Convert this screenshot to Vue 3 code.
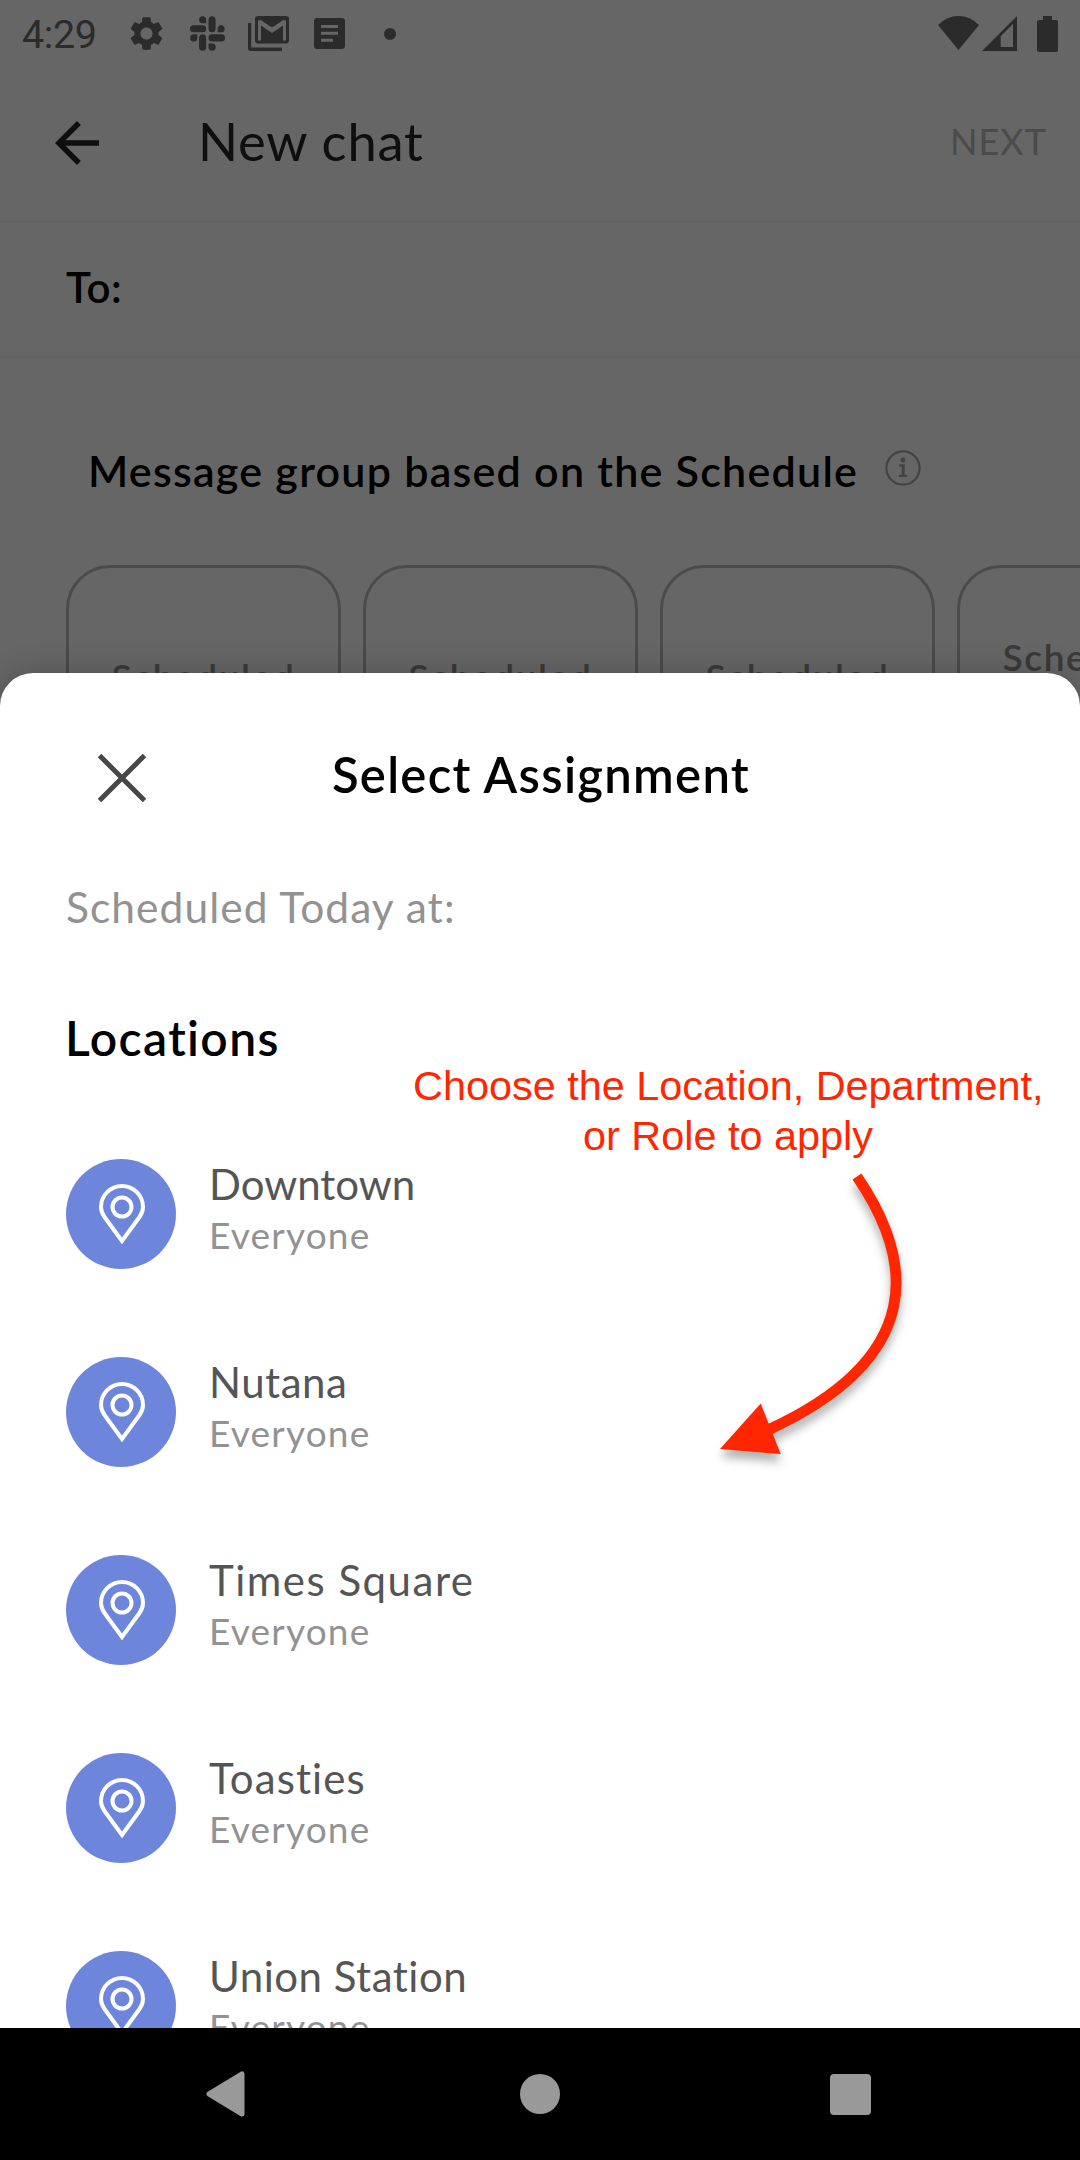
<template>
  <div class="screen">
    <header class="status-bar">
      <span class="clock">4:29</span>
      <svg class="status-gear" viewBox="2.2 2 19.6 20">
        <path d="M19.14 12.94c.04-.3.06-.61.06-.94 0-.32-.02-.64-.07-.94l2.03-1.58a.49.49 0 0 0 .12-.61l-1.92-3.32a.488.488 0 0 0-.59-.22l-2.39.96c-.5-.38-1.03-.7-1.62-.94l-.36-2.54a.484.484 0 0 0-.48-.41h-3.84c-.24 0-.43.17-.47.41l-.36 2.54c-.59.24-1.13.57-1.62.94l-2.39-.96c-.22-.08-.47 0-.59.22L2.74 8.87c-.12.21-.08.47.12.61l2.03 1.58c-.05.3-.09.63-.09.94s.02.64.07.94l-2.03 1.58a.49.49 0 0 0-.12.61l1.92 3.32c.12.22.37.29.59.22l2.39-.96c.5.38 1.03.7 1.62.94l.36 2.54c.05.24.24.41.48.41h3.84c.24 0 .44-.17.47-.41l.36-2.54c.59-.24 1.13-.56 1.62-.94l2.39.96c.22.08.47 0 .59-.22l1.92-3.32c.12-.22.07-.47-.12-.61l-2.01-1.58zM12 15.6c-1.98 0-3.6-1.62-3.6-3.6s1.62-3.6 3.6-3.6 3.6 1.62 3.6 3.6-1.62 3.6-3.6 3.6z" />
      </svg>
      <svg class="status-slack" viewBox="0 0 104 103">
        <path d="M48 21H37.500A10.500 10.500 0 1 1 48 10.500z" />
        <rect x="55" y="0" width="21" height="48" rx="10.500" />
        <path d="M82 48V37.500A10.500 10.500 0 1 1 92.500 48z" />
        <rect x="0" y="27" width="48" height="21" rx="10.500" />
        <path d="M22 54V65A10.800 10.800 0 1 1 11 54z" />
        <rect x="27" y="54" width="21" height="49" rx="10.500" />
        <rect x="55" y="54" width="49" height="21" rx="10.500" />
        <path d="M55 81H65.500A10.800 10.800 0 1 1 55 92z" />
      </svg>
      <svg class="status-mail" viewBox="0 0 41 35">
        <path d="M0 7h3.200v24.600H34V35H3q-3 0-3-3z" />
        <path fill-rule="evenodd" d="M10 0h28q3 0 3 3v21.500q0 3-3 3H10q-3 0-3-3V3q0-3 3-3zM10 4.500V24.500H13V9.500L24 17L35 9.500V24.500H38V4.500L35.500 4L24 11.500L12.500 4z" />
      </svg>
      <svg class="status-note" viewBox="0 0 31 31">
        <path fill-rule="evenodd" d="M3 0h25q3 0 3 3v25q0 3-3 3H3q-3 0-3-3V3q0-3 3-3zM7 7v3h17V7zM7 13.800v3h17v-3zM7 20.800v3h12v-3z" />
      </svg>
      <i class="status-dot"></i>
      <svg class="status-wifi" viewBox="0 0 41 34">
        <path d="M20.500 34L0 9Q9 0 20.500 0T41 9z" />
      </svg>
      <svg class="status-signal" viewBox="0 0 35 35">
        <path fill-rule="evenodd" d="M0 35L35 0V35zM18.700 20.300V31H31V8z" />
      </svg>
      <svg class="status-battery" viewBox="0 0 21 36">
        <path d="M6 0h9v4h4q2 0 2 2v28q0 2-2 2H2q-2 0-2-2V6q0-2 2-2h4z" />
      </svg>
    </header>

    <nav class="app-bar">
      <svg class="back" viewBox="0 0 24 24">
        <path d="M20 11H7.830l5.590-5.590L12 4l-8 8 8 8 1.410-1.410L7.830 13H20v-2z" />
      </svg>
      <h1>New chat</h1>
      <span class="next">NEXT</span>
    </nav>

    <div class="recipients">To:</div>

    <section class="groups">
      <div class="groups-head">
        <h2>Message group based on the Schedule</h2>
        <svg class="info" viewBox="0 0 36 36">
          <circle cx="18" cy="18" r="16.600" fill="none" stroke="#a8a8a8" stroke-width="2.200" />
          <circle cx="18" cy="10" r="2.400" />
          <path d="M14.200 14.300h5.500v10.500h2.500v2.300h-8.200v-2.300h2.600v-8.200h-2.400z" />
        </svg>
      </div>
      <div class="cards">
        <div v-for="(card, i) in cards" :key="i" class="card" :class="{ tall: card.length > 2 }">
          <span v-for="line in card" :key="line">{{ line }}</span>
        </div>
      </div>
    </section>

    <div class="scrim"></div>

    <section class="sheet">
      <div class="sheet-head">
        <svg class="close" viewBox="0 0 48 48">
          <path d="M1.500 1.500L46.500 46.500M46.500 1.500L1.500 46.500" />
        </svg>
        <h2>Select Assignment</h2>
      </div>
      <p class="subtitle">Scheduled Today at:</p>
      <h3>Locations</h3>
      <ul class="locations">
        <li v-for="location in locations" :key="location.name">
          <span class="avatar">
            <svg viewBox="0 0 46 60">
              <path d="M23 57L5.500 33Q2 28 2 23A21 21 0 0 1 44 23Q44 28 40.500 33z" />
              <circle cx="23" cy="23" r="9.500" />
            </svg>
          </span>
          <span class="label">
            <span class="name" :style="{ letterSpacing: location.tracking + 'px' }">{{ location.name }}</span>
            <span class="who">Everyone</span>
          </span>
        </li>
      </ul>
    </section>

    <!-- callout drawn over the sheet -->
    <p class="callout">Choose the Location, Department,<br /><span>or Role to apply</span></p>
    <svg class="arrow" viewBox="700 1160 220 320">
      <path d="M857 1176.500C914 1260 927 1357 768 1430" fill="none" stroke="#ff2600" stroke-width="10.800" />
      <path d="M720 1449L760.700 1403.500L780.700 1454z" fill="#ff2600" />
    </svg>

    <footer class="nav-bar">
      <svg class="nav-back" viewBox="0 0 39 46">
        <path d="M3 23L36 3V43z" />
      </svg>
      <i class="nav-home"></i>
      <i class="nav-recent"></i>
    </footer>
  </div>
</template>

<script setup>
const locations = [
  { name: 'Downtown', tracking: 0 },
  { name: 'Nutana', tracking: 0.5 },
  { name: 'Times Square', tracking: 1.5 },
  { name: 'Toasties', tracking: 1.1 },
  { name: 'Union Station', tracking: 0.5 }
];

const cards = [
  ['Scheduled', 'Now'],
  ['Scheduled', 'Today'],
  ['Scheduled', 'Tomorrow'],
  ['Scheduled', 'on a', 'Date']
];
</script>

<style>
body {
  margin: 0;
}
</style>

<style scoped>
.screen {
  position: relative;
  width: 1080px;
  height: 2160px;
  overflow: hidden;
  background: #fff;
  font-family: Lato, "Open Sans", sans-serif;
  font-variant-ligatures: none;
}

h1,
h2,
h3,
p,
ul {
  margin: 0;
  padding: 0;
}

svg {
  display: block;
  flex: none;
}

.status-bar {
  display: flex;
  align-items: center;
  box-sizing: border-box;
  height: 67px;
  padding: 0 22px;
  fill: #6b6b6b;
  color: #6b6b6b;
}

.clock {
  width: 108px;
  padding-top: 1px;
  font-family: Roboto, sans-serif;
  font-size: 39.5px;
  letter-spacing: -0.4px;
  white-space: nowrap;
}

.status-gear {
  width: 33px;
  height: 35px;
}

.status-slack {
  width: 35px;
  height: 35px;
  margin-left: 27px;
}

.status-mail {
  width: 41px;
  height: 35px;
  margin-left: 23px;
}

.status-note {
  width: 31px;
  height: 31px;
  margin-left: 25px;
}

.status-dot {
  width: 12px;
  height: 12px;
  margin-left: 39px;
  border-radius: 50%;
  background: #6b6b6b;
}

.status-wifi {
  width: 41px;
  height: 34px;
  margin: 0 3px 2px auto;
}

.status-signal {
  width: 35px;
  height: 35px;
  margin: 0 20px 1px 0;
}

.status-battery {
  width: 21px;
  height: 36px;
}

.app-bar {
  display: flex;
  align-items: center;
  box-sizing: border-box;
  height: 156px;
  padding: 0 33px 4px 44px;
  border-bottom: 3px solid #f6f6f6;
}

.back {
  width: 66px;
  height: 66px;
  margin-top: 2px;
  fill: #262626;
}

h1 {
  flex: 1;
  margin: -2px 0 0 88px;
  color: #262626;
  font-size: 52.5px;
  font-weight: 400;
  letter-spacing: 0.8px;
}

.next {
  margin-top: -1px;
  color: #bbb;
  font-size: 36px;
  letter-spacing: 1px;
}

.recipients {
  height: 132px;
  padding-left: 66px;
  border-bottom: 3px solid #f7f7f7;
  color: #000;
  font-size: 42px;
  font-weight: 600;
  letter-spacing: 0.6px;
  line-height: 128px;
}

.groups-head {
  display: flex;
  align-items: center;
  height: 207px;
  padding: 0 0 0 88px;
}

.groups-head h2 {
  width: 797px;
  padding-top: 18px;
  font-size: 43px;
  font-weight: 600;
  letter-spacing: 1.25px;
  white-space: nowrap;
}

.info {
  width: 36px;
  height: 36px;
  margin-top: 13px;
  fill: #a8a8a8;
}

.cards {
  display: flex;
  gap: 22px;
  padding-left: 66px;
}

.card {
  display: flex;
  flex: none;
  flex-direction: column;
  align-items: center;
  justify-content: center;
  box-sizing: border-box;
  width: 275px;
  height: 275px;
  padding-bottom: 2px;
  border: 3px solid #bbb;
  border-radius: 44px;
  color: #919191;
  font-size: 37px;
  font-weight: 600;
  letter-spacing: 1.6px;
  line-height: 50px;
}

.card.tall {
  padding-bottom: 4px;
  line-height: 44px;
}

.scrim {
  position: absolute;
  inset: 0;
  background: rgba(0, 0, 0, 0.6);
}

.sheet {
  position: absolute;
  top: 673px;
  right: 0;
  bottom: 132px;
  left: 0;
  overflow: hidden;
  border-radius: 33px 33px 0 0;
  background: #fff;
  box-shadow: 0 0 30px rgba(0, 0, 0, 0.22);
}

.sheet-head {
  display: grid;
  grid-template-columns: 1fr auto 1fr;
  align-items: center;
  height: 206px;
}

.close {
  width: 48px;
  height: 48px;
  margin: 4px 0 0 98px;
  fill: none;
  stroke: #474747;
  stroke-width: 5;
}

.sheet-head h2 {
  margin: -4px 0 0 2px;
  font-size: 49px;
  font-weight: 600;
  letter-spacing: 1.3px;
}

.subtitle {
  height: 56px;
  padding-left: 66px;
  color: #929292;
  font-size: 42.5px;
  letter-spacing: 1.05px;
  line-height: 56px;
}

h3 {
  padding: 73px 0 2px 65px;
  font-size: 48px;
  font-weight: 600;
  letter-spacing: 1.4px;
  line-height: 60px;
}

.locations {
  padding: 89px 0 0 66px;
  list-style: none;
}

.locations li {
  display: flex;
  height: 110px;
  margin-bottom: 88px;
}

.avatar {
  display: flex;
  justify-content: center;
  width: 110px;
  height: 110px;
  border-radius: 50%;
  background: #6d86db;
}

.avatar svg {
  width: 46px;
  height: 60px;
  margin: 25px 0 0 1px;
  fill: none;
  stroke: #fff;
  stroke-width: 4;
}

.label {
  display: flex;
  flex-direction: column;
  margin-left: 33px;
  white-space: nowrap;
}

.name {
  color: #555;
  font-size: 42px;
  line-height: 50px;
}

.who {
  color: #929292;
  font-size: 37px;
  letter-spacing: 1.2px;
  line-height: 52px;
}

.callout {
  position: absolute;
  top: 1061px;
  left: 413px;
  width: 630px;
  color: #ff2600;
  font-family: "Liberation Sans", Arial, sans-serif;
  font-size: 41.4px;
  line-height: 50px;
  text-align: center;
  white-space: nowrap;
}

.arrow {
  position: absolute;
  top: 1160px;
  left: 700px;
  width: 220px;
  height: 320px;
  filter: drop-shadow(0 8px 5px rgba(0, 0, 0, 0.3));
}

.nav-bar {
  position: absolute;
  right: 0;
  bottom: 0;
  left: 0;
  display: flex;
  align-items: center;
  height: 132px;
  background: #000;
}

.nav-back {
  width: 39px;
  height: 46px;
  margin-left: 206px;
  fill: #999;
  stroke: #999;
  stroke-width: 5;
  stroke-linejoin: round;
}

.nav-home {
  width: 40px;
  height: 40px;
  margin-left: 275px;
  border-radius: 50%;
  background: #999;
}

.nav-recent {
  width: 41px;
  height: 41px;
  margin-left: 270px;
  border-radius: 4px;
  background: #999;
}
</style>
